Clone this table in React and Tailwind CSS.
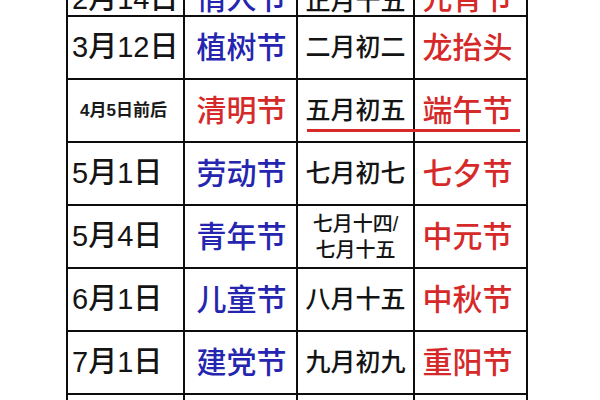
import React from 'react';

const FONT = { fontFamily: '"Liberation Sans", "Noto Sans CJK SC", sans-serif' };

const rows = [
  { date: '2月14日', fest: '情人节', festColor: 'blue', lunar: '正月十五', lunarFest: '元宵节', top: true },
  { date: '3月12日', fest: '植树节', festColor: 'blue', lunar: '二月初二', lunarFest: '龙抬头' },
  { date: '4月5日前后', small: true, fest: '清明节', festColor: 'red', lunar: '五月初五', lunarFest: '端午节' },
  { date: '5月1日', fest: '劳动节', festColor: 'blue', lunar: '七月初七', lunarFest: '七夕节' },
  { date: '5月4日', fest: '青年节', festColor: 'blue', lunar: ['七月十四/', '七月十五'], lunarFest: '中元节' },
  { date: '6月1日', fest: '儿童节', festColor: 'blue', lunar: '八月十五', lunarFest: '中秋节' },
  { date: '7月1日', fest: '建党节', festColor: 'blue', lunar: '九月初九', lunarFest: '重阳节' },
  { date: '', fest: '', festColor: 'blue', lunar: '', lunarFest: '' },
];

const Cell = ({ children, className = '', top }) => (
  <div
    className={`flex h-[63px] border-r-2 border-b-2 border-[#0d0d0d] overflow-hidden ${
      top ? 'items-end pb-[1px]' : 'items-center'
    } ${className}`}
  >
    {children}
  </div>
);

export default function App() {
  return (
    <div className="w-[600px] h-[400px] overflow-hidden bg-white" style={FONT}>
      <div className="relative ml-[66px] mt-[-46px] w-[462px] border-l-2 border-[#0d0d0d]">
        <div className="grid grid-cols-[117px_113px_117px_113px]">
          {rows.map((r, i) => (
            <React.Fragment key={i}>
              <Cell top={r.top} className={r.small ? 'pl-[12px]' : 'pl-[4px]'}>
                {r.small ? (
                  <span className="text-[17px] font-bold text-[#1a1a1a] leading-none">{r.date}</span>
                ) : (
                  <span className="text-[29px] font-medium text-[#141414] leading-none">{r.date}</span>
                )}
              </Cell>
              <Cell top={r.top} className="justify-center pl-[2px]">
                <span
                  className={`text-[30px] font-medium leading-none ${
                    r.festColor === 'red' ? 'text-[#d62a2a]' : 'text-[#2525b0]'
                  }`}
                >
                  {r.fest}
                </span>
              </Cell>
              <Cell top={r.top} className="justify-center">
                {Array.isArray(r.lunar) ? (
                  <div className="flex flex-col items-center text-[20px] font-medium leading-[26px] text-[#141414]">
                    {r.lunar.map((l) => (
                      <span key={l}>{l}</span>
                    ))}
                  </div>
                ) : (
                  <span className="text-[25px] font-medium leading-none text-[#141414]">{r.lunar}</span>
                )}
              </Cell>
              <Cell top={r.top} className="justify-center pr-[6px]">
                <span className="text-[30px] font-medium leading-none text-[#d62a2a]">{r.lunarFest}</span>
              </Cell>
            </React.Fragment>
          ))}
        </div>
        {/* red underline under 五月初五 / 端午节 */}
        <div className="absolute left-[239px] top-[175px] w-[213px] h-[3px] bg-[#d62a2a]" />
      </div>
    </div>
  );
}
